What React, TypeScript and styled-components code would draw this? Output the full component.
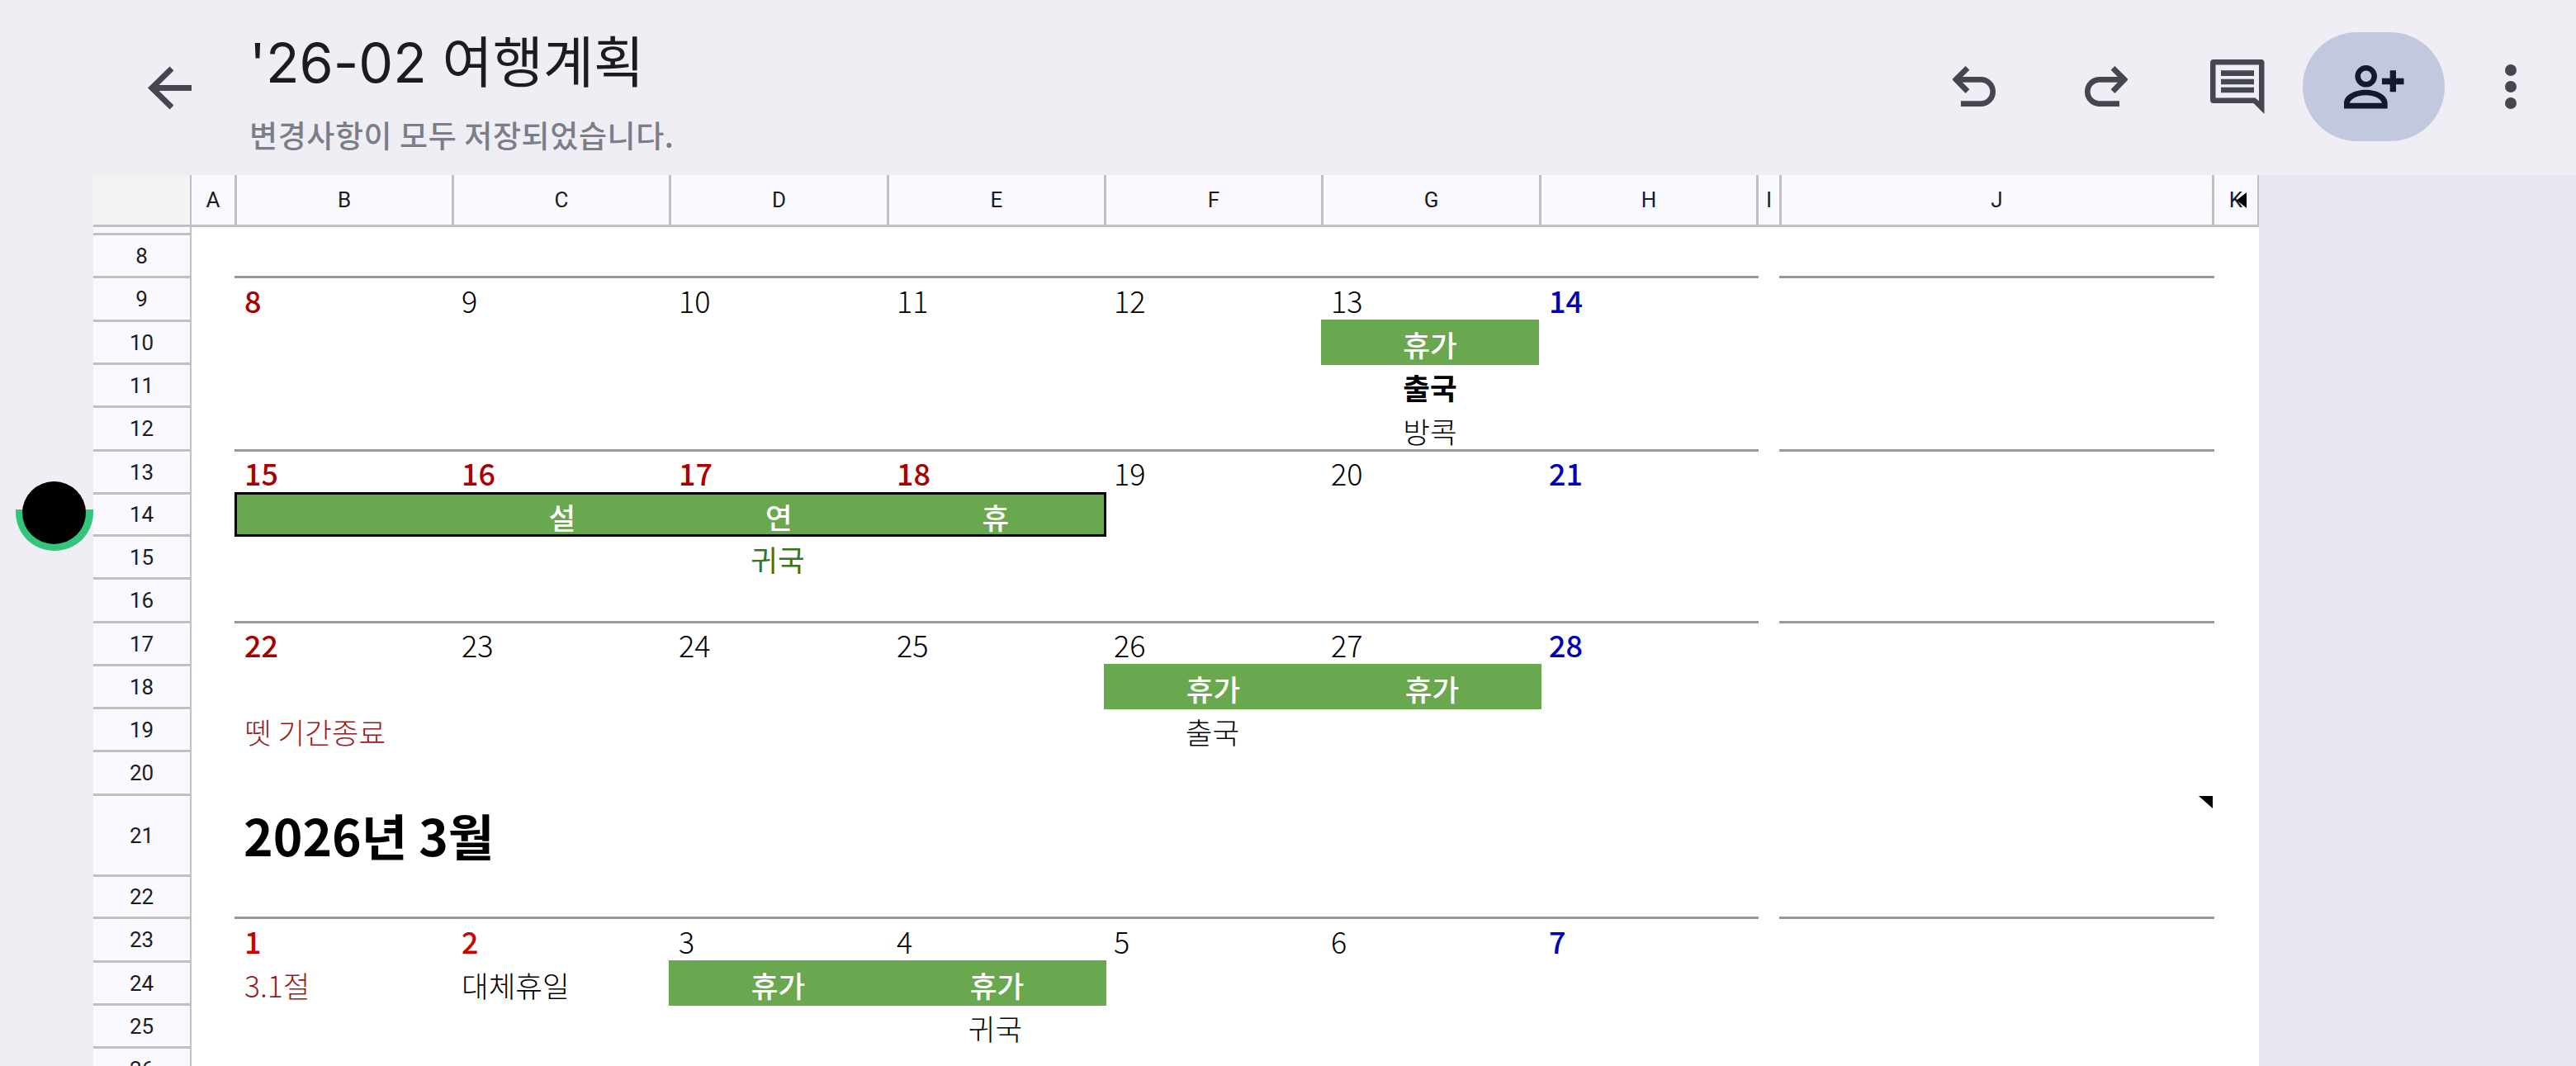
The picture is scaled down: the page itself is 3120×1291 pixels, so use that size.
import React from "react";
import styled, { createGlobalStyle } from "styled-components";

const KR = `"Noto Sans CJK KR", "Noto Sans", sans-serif`;
const UI = `Roboto, "Noto Sans CJK KR", sans-serif`;
const GRID_LINE = "#c0c0c4";

const Global = createGlobalStyle`
  html, body { margin: 0; padding: 0; height: 1291px; overflow: hidden; background: #eeeef4; }
  #root { height: 1291px; }
`;

const Page = styled.div`
  position: relative;
  width: 3120px;
  height: 1291px;
  display: flex;
  flex-direction: column;
  overflow: hidden;
  background: #eeeef4;
`;

const TopBar = styled.header`
  flex: 0 0 212px;
  display: flex;
  align-items: center;
  padding-left: 179px;
  box-sizing: border-box;
`;

const BackIcon = styled.svg`
  width: 53px;
  height: 53px;
  flex: none;
  margin-right: 70px;
`;

const TitleBlock = styled.div`
  display: flex;
  flex-direction: column;
  margin-top: 8px;
`;

const Title = styled.h1`
  margin: 0;
  font: 400 66.5px/86px Inter, ${KR};
  color: #1a1c20;
  letter-spacing: 0;
`;

const Subtitle = styled.div`
  margin-top: 19px;
  font: 500 37px/50px ${KR};
  letter-spacing: 0.6px;
  color: #7b7d88;
`;

const Actions = styled.div`
  margin-left: auto;
  display: flex;
  align-items: center;
  padding-bottom: 2px;
`;

const IconButton = styled.div`
  width: 159px;
  height: 132px;
  display: flex;
  align-items: center;
  justify-content: center;
`;

const ShareButton = styled.div`
  width: 172px;
  height: 132px;
  border-radius: 66px;
  background: #c2c8dd;
  display: flex;
  align-items: center;
  justify-content: center;
`;

const Workspace = styled.main`
  flex: 1;
  display: flex;
  min-height: 0;
`;

const Gutter = styled.div`
  flex: 0 0 113px;
`;

const RightPanel = styled.div`
  flex: 1;
  background: #e7e7f1;
`;

const ScrollHandle = styled.svg`
  position: absolute;
  left: 19px;
  top: 583px;
  width: 94px;
  height: 85px;
`;

const Sheet = styled.section`
  flex: 0 0 2623px;
  display: grid;
  grid-template-columns: 119px 52px 263px 263px 264px 263px 263px 264px 263px 28px 524px 57px;
  grid-template-rows: 63px 7px 52px 53px 52px 52px 53px 52px 51px 52px 53px 52px 52px 52px 53px 98px 51px 53px 52px 52px 52px;
  background: #fff;
  align-content: start;
  height: 1079px;
  overflow: hidden;
`;

const Corner = styled.div`
  grid-column: 1;
  grid-row: 1;
  background: #f3f3f3;
  border-right: 2px solid ${GRID_LINE};
  border-bottom: 3px solid ${GRID_LINE};
`;

const ColHeader = styled.div<{ $col: number; $first?: boolean; $last?: boolean }>`
  grid-column: ${(p) => p.$col};
  grid-row: 1;
  position: relative;
  background: #f9f9ff;
  display: flex;
  align-items: center;
  justify-content: center;
  font: 400 26px/1 ${UI};
  color: #1c1b1f;
  border-bottom: 3px solid ${GRID_LINE};
  border-left: ${(p) => (p.$first ? "none" : `3px solid ${GRID_LINE}`)};
  border-right: ${(p) => (p.$last ? `2px solid ${GRID_LINE}` : "none")};
`;

const FreezeMark = styled.span`
  position: absolute;
  left: 27px;
  top: 21px;
  width: 12px;
  height: 19px;
  background: #000;
  clip-path: polygon(100% 0, 100% 100%, 0 50%);
`;

const RowHeader = styled.div<{ $row: number; $stub?: boolean }>`
  grid-column: 1;
  grid-row: ${(p) => p.$row};
  background: #f9f9ff;
  display: flex;
  align-items: center;
  justify-content: center;
  font: 400 26px/1 ${UI};
  color: #1c1b1f;
  border-right: 2px solid ${GRID_LINE};
  border-top: ${(p) => (p.$stub ? "none" : `3px solid ${GRID_LINE}`)};
`;

const Rule = styled.div<{ $row: number; $from: number; $to: number }>`
  grid-column: ${(p) => p.$from} / ${(p) => p.$to};
  grid-row: ${(p) => p.$row};
  align-self: start;
  height: 3px;
  margin-right: -3px;
  background: #999;
`;

const tones: Record<string, string> = {
  plain: "#000",
  holiday: "#a80000",
  bright: "#cc0000",
  sunday: "#0000bb",
  note: "#991b1b",
  back: "#38761d",
};

const DateCell = styled.div<{ $row: number; $col: number; $tone: string }>`
  grid-column: ${(p) => p.$col};
  grid-row: ${(p) => p.$row};
  align-self: end;
  padding: 0 0 0 12px;
  white-space: nowrap;
  font: ${(p) => (p.$tone === "plain" ? 300 : 500)} 36px/48px ${KR};
  color: ${(p) => tones[p.$tone]};
`;

const NoteCell = styled.div<{ $row: number; $col: number; $tone: string; $center?: boolean; $bold?: boolean; $mid?: boolean }>`
  grid-column: ${(p) => p.$col};
  grid-row: ${(p) => p.$row};
  align-self: end;
  padding-left: ${(p) => (p.$center ? 0 : 12)}px;
  text-align: ${(p) => (p.$center ? "center" : "left")};
  white-space: nowrap;
  font: ${(p) => (p.$bold ? 700 : p.$mid ? 400 : 300)} 35.5px/44px ${KR};
  color: ${(p) => tones[p.$tone]};
`;

const Band = styled.div<{ $row: number; $from: number; $to: number; $outlined?: boolean; $flush?: boolean }>`
  grid-column: ${(p) => p.$from} / ${(p) => p.$to};
  grid-row: ${(p) => p.$row};
  display: grid;
  grid-auto-flow: column;
  grid-auto-columns: 1fr;
  align-items: center;
  box-sizing: border-box;
  margin-right: ${(p) => (p.$flush ? 0 : -3)}px;
  margin-bottom: -3px;
  background: #6aa84f;
  border: ${(p) => (p.$outlined ? "3px solid #000" : "none")};
  position: relative;
  z-index: 1;
`;

const BandLabel = styled.span`
  text-align: center;
  font: 500 35.5px/40px ${KR};
  color: #fff;
  padding-top: 5px;
`;

const MonthTitle = styled.div`
  grid-column: 3 / 6;
  grid-row: 16;
  align-self: center;
  padding: 2px 0 0 11px;
  font: 700 60.5px/80px ${KR};
  color: #000;
  white-space: nowrap;
`;

const CommentCell = styled.div`
  grid-column: 11;
  grid-row: 16;
  position: relative;
`;

const CommentMark = styled.span`
  position: absolute;
  right: -1px;
  top: 3px;
  width: 17px;
  height: 15px;
  background: #000;
  clip-path: polygon(0 0, 100% 0, 100% 100%);
`;

const ICON = "#44474f";

const columns = ["A", "B", "C", "D", "E", "F", "G", "H", "I", "J", "K"];
const rowNumbers = Array.from({ length: 19 }, (_, i) => i + 8);

const dates: [number, number, string, string][] = [
  [4, 3, "8", "holiday"], [4, 4, "9", "plain"], [4, 5, "10", "plain"], [4, 6, "11", "plain"],
  [4, 7, "12", "plain"], [4, 8, "13", "plain"], [4, 9, "14", "sunday"],
  [8, 3, "15", "holiday"], [8, 4, "16", "holiday"], [8, 5, "17", "holiday"], [8, 6, "18", "holiday"],
  [8, 7, "19", "plain"], [8, 8, "20", "plain"], [8, 9, "21", "sunday"],
  [12, 3, "22", "holiday"], [12, 4, "23", "plain"], [12, 5, "24", "plain"], [12, 6, "25", "plain"],
  [12, 7, "26", "plain"], [12, 8, "27", "plain"], [12, 9, "28", "sunday"],
  [18, 3, "1", "bright"], [18, 4, "2", "bright"], [18, 5, "3", "plain"], [18, 6, "4", "plain"],
  [18, 7, "5", "plain"], [18, 8, "6", "plain"], [18, 9, "7", "sunday"],
];

const ruleRows = [4, 8, 12, 18];

export default function App() {
  return (
    <Page>
      <Global />
      <TopBar>
        <BackIcon viewBox="0 0 53 53" fill="none" stroke={ICON} strokeWidth="7">
          <path d="M53 26.5H6M29 3 5 26.5 29 50" />
        </BackIcon>
        <TitleBlock>
          <Title>'26-02 여행계획</Title>
          <Subtitle>변경사항이 모두 저장되었습니다.</Subtitle>
        </TitleBlock>
        <Actions>
          <IconButton>
            <svg width="53" height="50" viewBox="0 0 53 50" fill="none" stroke={ICON} strokeWidth="6.7">
              <path d="M18 2.3 4 16.3 18 30.7M4 16.3H34A14.7 14.7 0 0 1 34 45.7H10" />
            </svg>
          </IconButton>
          <IconButton>
            <svg width="53" height="50" viewBox="0 0 53 50" fill="none" stroke={ICON} strokeWidth="6.7">
              <path d="M35 2.3 49 16.3 35 30.7M49 16.3H19A14.7 14.7 0 0 0 19 45.7H43" />
            </svg>
          </IconButton>
          <IconButton>
            <svg width="66" height="66" viewBox="0 0 66 66" fill={ICON}>
              <path
                fillRule="evenodd"
                d="M4 0H61.500A4 4 0 0 1 65.500 4V66L52.500 53H4A4 4 0 0 1 0 49V4A4 4 0 0 1 4 0ZM6.500 6.500V46.500H54.500L59 50.500V6.500Z"
              />
              <path d="M13 13.300H53V20H13ZM13 23.700H53V30.300H13ZM13 33.700H53V40.300H13Z" />
            </svg>
          </IconButton>
          <ShareButton>
            <svg width="73" height="53" viewBox="0 0 73 53" fill="#131a2e">
              <path
                fillRule="evenodd"
                d="M26.700 0A13.300 13.300 0 1 1 26.700 26.600 13.300 13.300 0 1 1 26.700 0ZM26.700 6.600A6.700 6.700 0 1 0 26.700 20 6.700 6.700 0 1 0 26.700 6.600Z"
              />
              <path
                fillRule="evenodd"
                d="M0 52.500V46C0 36 13 29.700 26.300 29.700 40 29.700 52.700 36 52.700 46V52.500ZM6.700 45.700H46C44 40 36 36.300 26.300 36.300 17 36.300 9 40 6.700 45.700Z"
              />
              <path d="M55.700 6.300H63V15.700H72.500V23.300H63V32.300H55.700V23.300H46V15.700H55.700Z" />
            </svg>
          </ShareButton>
          <IconButton>
            <svg width="14" height="54" viewBox="0 0 14 54" fill={ICON}>
              <circle cx="7" cy="7" r="7" />
              <circle cx="7" cy="27" r="7" />
              <circle cx="7" cy="47" r="7" />
            </svg>
          </IconButton>
        </Actions>
      </TopBar>

      <Workspace>
        <Gutter />
        <Sheet>
          <Corner />
          {columns.map((c, i) => (
            <ColHeader key={c} $col={i + 2} $first={i === 0} $last={c === "K"}>
              {c}
              {c === "K" && <FreezeMark />}
            </ColHeader>
          ))}
          <RowHeader $row={2} $stub />
          {rowNumbers.map((n) => (
            <RowHeader key={n} $row={n - 5}>
              {n}
            </RowHeader>
          ))}

          {ruleRows.map((r) => (
            <React.Fragment key={r}>
              <Rule $row={r} $from={3} $to={10} />
              <Rule $row={r} $from={11} $to={12} />
            </React.Fragment>
          ))}

          {dates.map(([row, col, text, tone]) => (
            <DateCell key={`${row}-${col}`} $row={row} $col={col} $tone={tone}>
              {text}
            </DateCell>
          ))}

          <Band $row={5} $from={8} $to={9} $flush>
            <BandLabel>휴가</BandLabel>
          </Band>
          <NoteCell $row={6} $col={8} $tone="plain" $center $bold>
            출국
          </NoteCell>
          <NoteCell $row={7} $col={8} $tone="plain" $center>
            방콕
          </NoteCell>

          <Band $row={9} $from={3} $to={7} $outlined>
            <BandLabel />
            <BandLabel>설</BandLabel>
            <BandLabel>연</BandLabel>
            <BandLabel>휴</BandLabel>
          </Band>
          <NoteCell $row={10} $col={5} $tone="back" $center $mid>
            귀국
          </NoteCell>

          <Band $row={13} $from={7} $to={9}>
            <BandLabel>휴가</BandLabel>
            <BandLabel>휴가</BandLabel>
          </Band>
          <NoteCell $row={14} $col={3} $tone="note">
            뗏 기간종료
          </NoteCell>
          <NoteCell $row={14} $col={7} $tone="plain" $center>
            출국
          </NoteCell>

          <MonthTitle>2026년 3월</MonthTitle>
          <CommentCell>
            <CommentMark />
          </CommentCell>

          <NoteCell $row={19} $col={3} $tone="note">
            3.1절
          </NoteCell>
          <NoteCell $row={19} $col={4} $tone="plain">
            대체휴일
          </NoteCell>
          <Band $row={19} $from={5} $to={7}>
            <BandLabel>휴가</BandLabel>
            <BandLabel>휴가</BandLabel>
          </Band>
          <NoteCell $row={20} $col={6} $tone="plain" $center>
            귀국
          </NoteCell>
        </Sheet>
        <RightPanel />
      </Workspace>

      <ScrollHandle viewBox="0 0 94 85">
        <path d="M0 34H94V37C94 64 73 84 47 84S0 64 0 37Z" fill="#33c57a" />
        <ellipse cx="46.500" cy="38" rx="38.500" ry="38" fill="#000" />
      </ScrollHandle>
    </Page>
  );
}
